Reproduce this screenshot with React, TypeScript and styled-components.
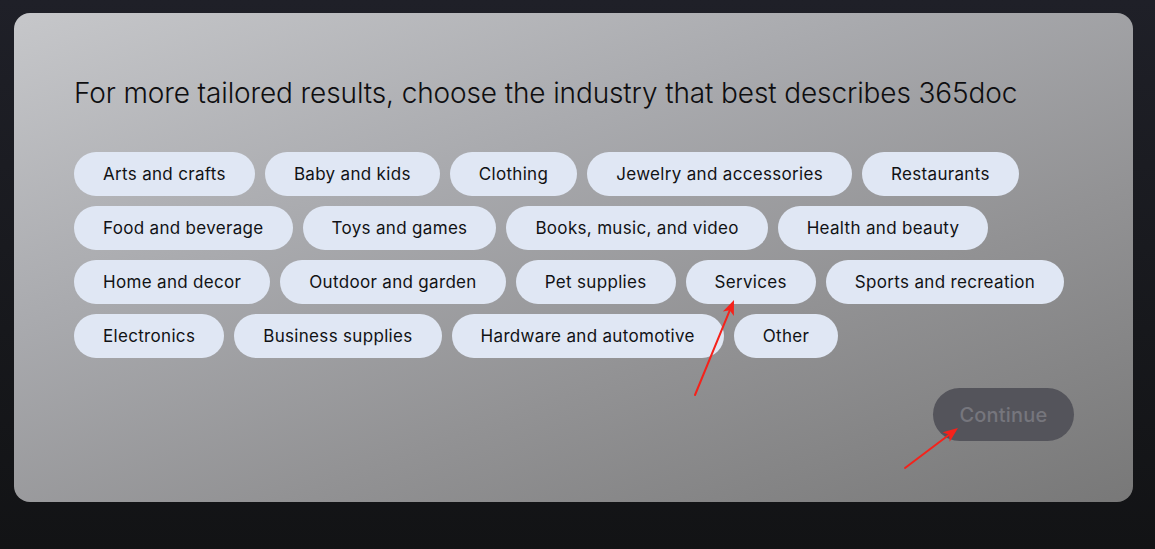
import styled, { createGlobalStyle } from 'styled-components';

const GlobalStyle = createGlobalStyle`
  html, body {
    margin: 0;
    padding: 0;
    height: 100%;
  }
  body {
    background: linear-gradient(180deg, #1f2028 0%, #17181c 60%, #121315 100%);
    font-family: Inter, "Noto Sans", sans-serif;
  }
`;

const Page = styled.div`
  position: relative;
  width: 1155px;
  height: 549px;
  padding: 13px 22px 0 14px;
  box-sizing: border-box;
`;

const Card = styled.section`
  width: 1119px;
  height: 489px;
  box-sizing: border-box;
  padding: 63px 59px 60px 60px;
  border-radius: 16px;
  background: linear-gradient(160deg, #c6c7ca 0%, #a9aaae 35%, #929294 65%, #787878 100%);
  display: flex;
  flex-direction: column;
`;

const Title = styled.h1`
  margin: 0 0 42px;
  font-size: 28px;
  line-height: 34px;
  font-weight: 300;
  color: #0e0e10;
  letter-spacing: -0.12px;
`;

const ChipList = styled.div`
  display: flex;
  flex-wrap: wrap;
  gap: 10px;
`;

const Chip = styled.button`
  height: 44px;
  padding: 0 29px;
  border: none;
  border-radius: 22px;
  background: #e0e7f4;
  color: #111214;
  font-family: Inter, "Noto Sans", sans-serif;
  font-size: 17px;
  font-weight: 400;
  letter-spacing: 0.32px;
  cursor: pointer;
`;

const Footer = styled.div`
  display: flex;
  justify-content: flex-end;
  margin-top: 30px;
`;

const ContinueButton = styled.button`
  width: 141px;
  height: 53px;
  border: none;
  border-radius: 27px;
  background: #54545b;
  color: #76767d;
  font-family: Inter, "Noto Sans", sans-serif;
  font-size: 20px;
  font-weight: 500;
  letter-spacing: 0.2px;
`;

const Annotations = styled.svg`
  position: absolute;
  left: 0;
  top: 0;
  pointer-events: none;
`;

const industries = [
  'Arts and crafts',
  'Baby and kids',
  'Clothing',
  'Jewelry and accessories',
  'Restaurants',
  'Food and beverage',
  'Toys and games',
  'Books, music, and video',
  'Health and beauty',
  'Home and decor',
  'Outdoor and garden',
  'Pet supplies',
  'Services',
  'Sports and recreation',
  'Electronics',
  'Business supplies',
  'Hardware and automotive',
  'Other',
];

const Arrow = ({ x1, y1, x2, y2 }: { x1: number; y1: number; x2: number; y2: number }) => {
  const a = Math.atan2(y2 - y1, x2 - x1);
  const len = 16;
  const w = 0.38;
  const p1 = [x2 - len * Math.cos(a - w), y2 - len * Math.sin(a - w)];
  const p2 = [x2 - len * Math.cos(a + w), y2 - len * Math.sin(a + w)];
  const bx = x2 - len * 0.7 * Math.cos(a);
  const by = y2 - len * 0.7 * Math.sin(a);
  return (
    <g>
      <line x1={x1} y1={y1} x2={bx} y2={by} stroke="#f5221b" strokeWidth="2" strokeLinecap="round" />
      <polygon points={`${x2},${y2} ${p1[0]},${p1[1]} ${bx},${by} ${p2[0]},${p2[1]}`} fill="#f5221b" />
    </g>
  );
};

export default function App() {
  return (
    <>
      <GlobalStyle />
      <Page>
        <Card>
          <Title>For more tailored results, choose the industry that best describes 365doc</Title>
          <ChipList>
            {industries.map((name) => (
              <Chip key={name}>{name}</Chip>
            ))}
          </ChipList>
          <Footer>
            <ContinueButton disabled>Continue</ContinueButton>
          </Footer>
        </Card>
        <Annotations width="1155" height="549" viewBox="0 0 1155 549">
          <Arrow x1={695} y1={395} x2={734} y2={300} />
          <Arrow x1={905} y1={468} x2={958} y2={428} />
        </Annotations>
      </Page>
    </>
  );
}
